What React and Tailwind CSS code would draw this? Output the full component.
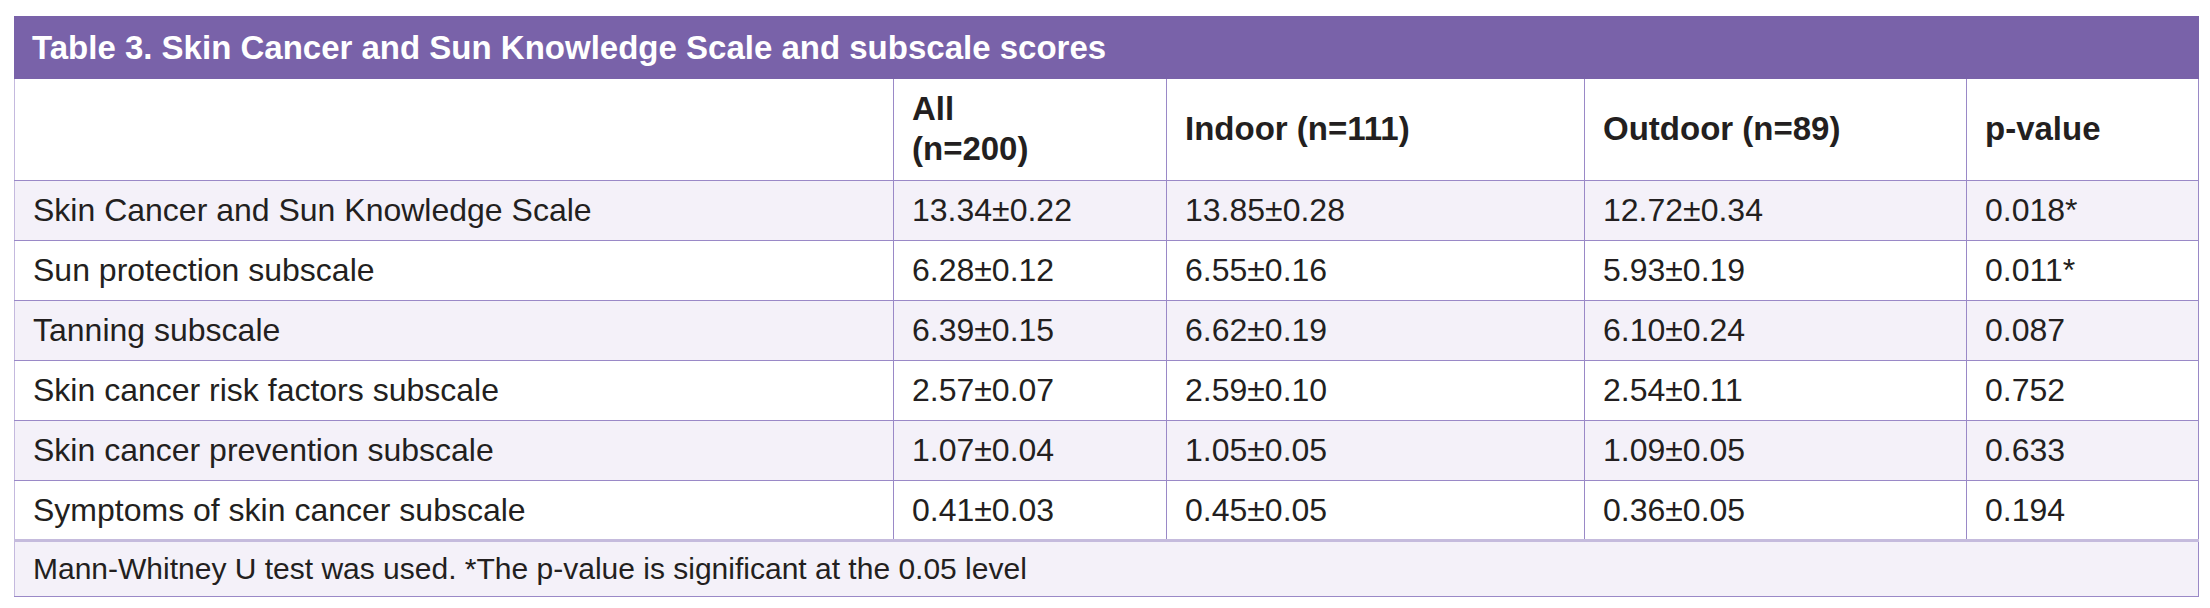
const rows = [
  ['Skin Cancer and Sun Knowledge Scale', '13.34±0.22', '13.85±0.28', '12.72±0.34', '0.018*'],
  ['Sun protection subscale', '6.28±0.12', '6.55±0.16', '5.93±0.19', '0.011*'],
  ['Tanning subscale', '6.39±0.15', '6.62±0.19', '6.10±0.24', '0.087'],
  ['Skin cancer risk factors subscale', '2.57±0.07', '2.59±0.10', '2.54±0.11', '0.752'],
  ['Skin cancer prevention subscale', '1.07±0.04', '1.05±0.05', '1.09±0.05', '0.633'],
  ['Symptoms of skin cancer subscale', '0.41±0.03', '0.45±0.05', '0.36±0.05', '0.194'],
]

function Cell({ children, first, last, head }) {
  return (
    <td
      className={`align-middle pl-[18px] border-b-[1.5px] border-b-[#9a89c7] border-l-[1.5px] ${
        first ? 'border-l-[#c4b9de]' : 'border-l-[#9a89c7]'
      } ${last ? 'border-r-[1.5px] border-r-[#9a89c7]' : ''} ${
        head ? 'font-bold text-[33px] leading-[40px]' : ''
      }`}
    >
      {children}
    </td>
  )
}

export default function App() {
  return (
    <div
      className="w-[2210px] h-[608px] bg-white pt-[16px] pl-[14px]"
      style={{ fontFamily: '"Liberation Sans", Arial, sans-serif' }}
    >
      <div className="w-[2185px]">
        <div className="h-[63px] bg-[#7962a9] text-white font-bold text-[33px] flex items-center pl-[18px]">
          Table 3. Skin Cancer and Sun Knowledge Scale and subscale scores
        </div>
        <table className="w-full table-fixed border-collapse text-[32px] text-[#231f20]">
          <colgroup>
            <col className="w-[879px]" />
            <col className="w-[273px]" />
            <col className="w-[418px]" />
            <col className="w-[382px]" />
            <col />
          </colgroup>
          <tbody>
            <tr className="h-[101px] bg-white">
              <Cell first head />
              <Cell head>
                All
                <br />
                (n=200)
              </Cell>
              <Cell head>Indoor (n=111)</Cell>
              <Cell head>Outdoor (n=89)</Cell>
              <Cell head last>p-value</Cell>
            </tr>
            {rows.map((r, i) => (
              <tr key={r[0]} className={`h-[60px] ${i % 2 === 0 ? 'bg-[#f4f1f9]' : 'bg-white'}`}>
                {r.map((v, j) => (
                  <Cell key={j} first={j === 0} last={j === 4}>
                    {v}
                  </Cell>
                ))}
              </tr>
            ))}
            <tr className="h-[56px] bg-[#f4f1f9]">
              <td
                colSpan={5}
                className="align-middle pl-[18px] text-[30px] border-t-[3px] border-t-[#c5bbdd] border-b-[1.5px] border-b-[#9a89c7] border-l-[1.5px] border-l-[#c4b9de] border-r-[1.5px] border-r-[#9a89c7]"
              >
                Mann-Whitney U test was used. *The p-value is significant at the 0.05 level
              </td>
            </tr>
          </tbody>
        </table>
      </div>
    </div>
  )
}
